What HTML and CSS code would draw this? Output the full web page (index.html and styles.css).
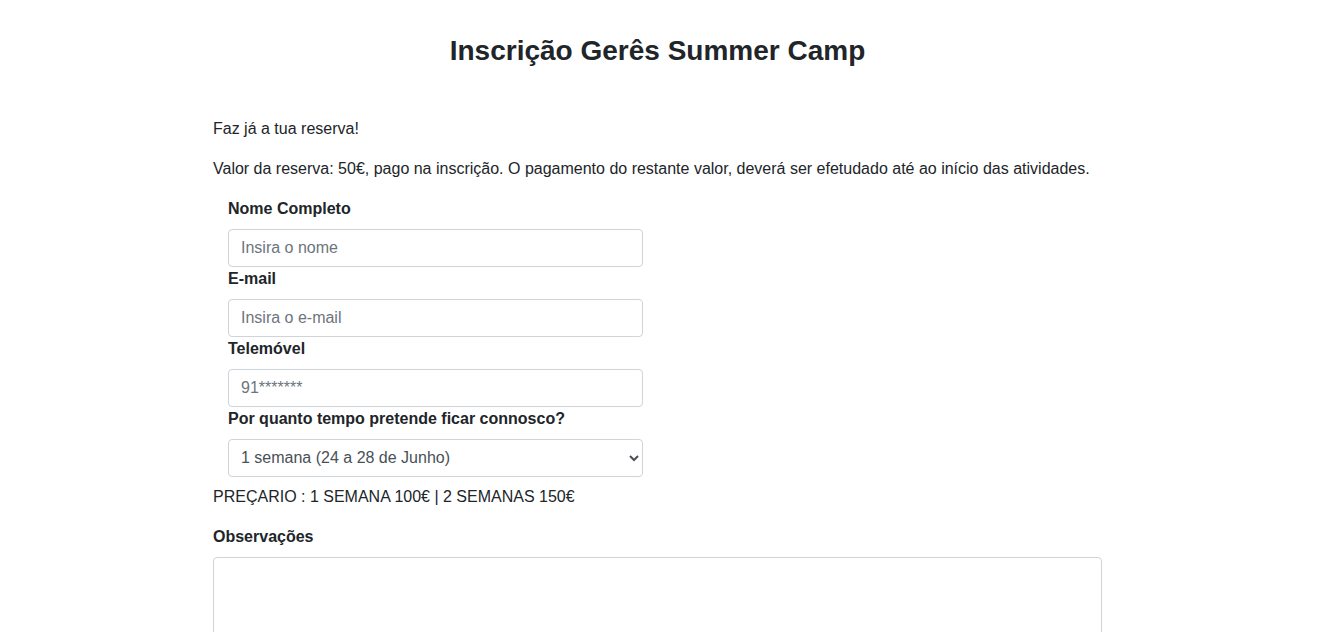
FILE: index.html
```html
<!DOCTYPE html>
<html lang="pt">
<head>
<meta charset="utf-8">
<title>Inscrição Gerês Summer Camp</title>
<link rel="stylesheet" href="styles.css">
</head>
<body>
<div class="container">
  <h1 class="title">Inscrição Gerês Summer Camp</h1>
  <p class="intro">Faz já a tua reserva!</p>
  <p class="intro">Valor da reserva: 50€, pago na inscrição. O pagamento do restante valor, deverá ser efetudado até ao início das atividades.</p>
  <form class="form">
    <div class="fields">
      <label class="label" for="nome">Nome Completo</label>
      <input class="control" id="nome" type="text" placeholder="Insira o nome">
      <label class="label" for="email">E-mail</label>
      <input class="control" id="email" type="email" placeholder="Insira o e-mail">
      <label class="label" for="tel">Telemóvel</label>
      <input class="control" id="tel" type="tel" placeholder="91*******">
      <label class="label" for="tempo">Por quanto tempo pretende ficar connosco?</label>
      <select class="control select" id="tempo">
        <option>1 semana (24 a 28 de Junho)</option>
        <option>2 semanas</option>
      </select>
    </div>
    <p class="prices">PREÇARIO : 1 SEMANA 100€ | 2 SEMANAS 150€</p>
    <label class="label obs-label" for="obs">Observações</label>
    <textarea class="control area" id="obs" rows="6"></textarea>
  </form>
</div>
</body>
</html>
```
FILE: styles.css
```css
* { box-sizing: border-box; }
html, body { margin: 0; padding: 0; background: #fff; }
body {
  font-family: "Liberation Sans", Arial, sans-serif;
  font-size: 16px;
  line-height: 1.5;
  color: #212529;
}
.container {
  width: 889px;
  margin: 0 0 0 213px;
}
.title {
  font-size: 28px;
  font-weight: 700;
  line-height: 1.2;
  text-align: center;
  margin: 34px 0 49px;
}
.intro { margin: 0 0 16px; }
.form { margin: 0; }
.fields {
  display: flex;
  flex-direction: column;
  align-items: flex-start;
  padding: 0 15px;
  width: 445px;
}
.label {
  display: block;
  font-weight: 700;
  margin-bottom: 8px;
}
.control {
  display: block;
  width: 100%;
  height: 38px;
  padding: 6px 12px;
  font-family: inherit;
  font-size: 16px;
  line-height: 1.5;
  color: #495057;
  background: #fff;
  border: 1px solid #ced4da;
  border-radius: 4px;
  margin: 0;
}
.control::placeholder { color: #6c757d; opacity: 1; }
.select { padding: 6px 10px 6px 8px; }
.prices { margin: 8px 0 16px; }
.obs-label { margin-top: 4px; }
.area {
  height: 150px;
  resize: vertical;
}
```
